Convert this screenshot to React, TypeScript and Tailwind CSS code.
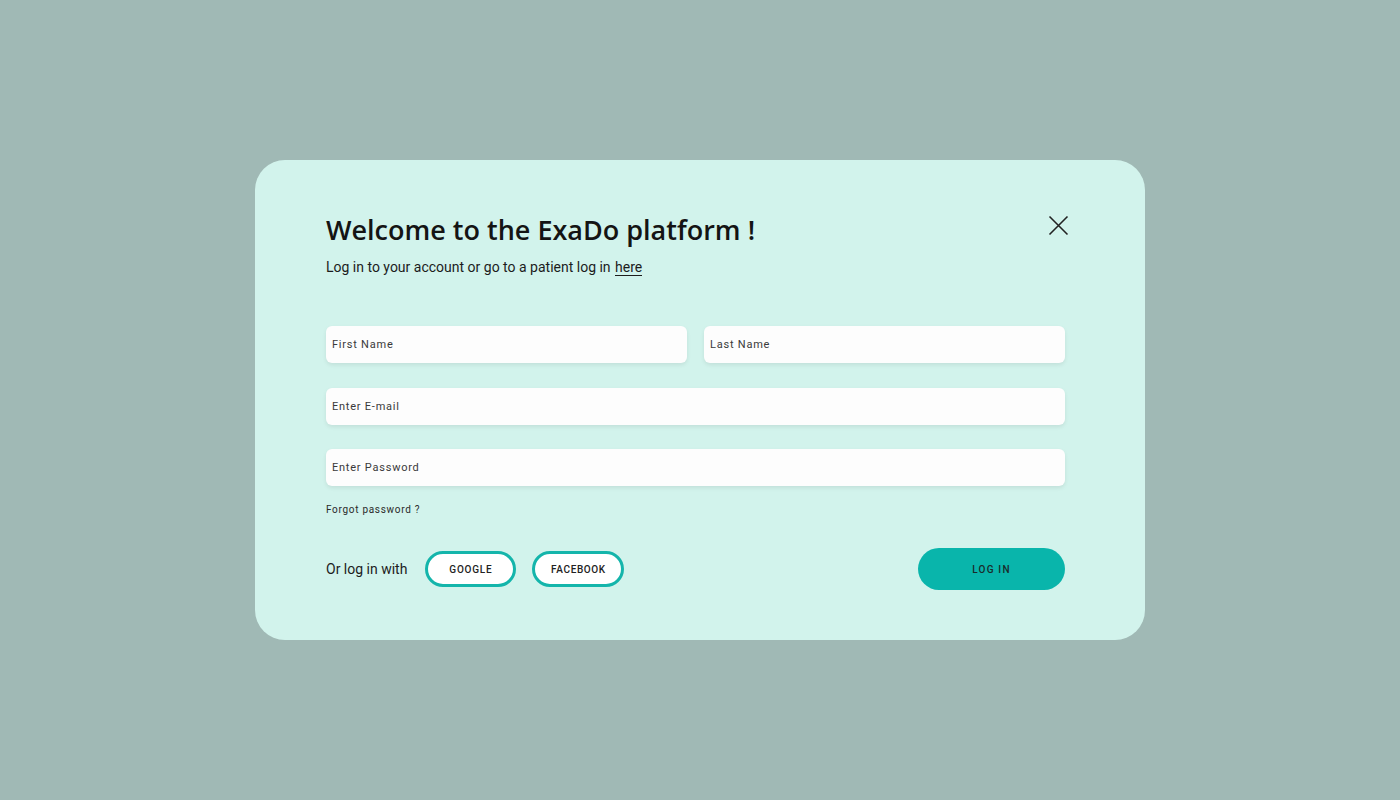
const inputClass =
  "h-[37px] w-full rounded-[6px] bg-[#fdfdfd] px-[6px] text-[11px] tracking-[0.07em] text-[#333] shadow-[0_2px_4px_rgba(0,0,0,0.08)] placeholder:text-[#3a3a3a] focus:outline-none";

const App = () => {
  return (
    <div className="flex h-[800px] w-full items-center justify-center bg-[#a0b9b5] font-['Roboto',sans-serif]">
      <div className="flex h-[480px] w-[890px] flex-col rounded-[30px] bg-[#d2f3ec] pl-[71px] pr-[80px] pt-[52px]">
        <div className="flex items-start justify-between">
          <div>
            <h1 className="text-[27px] font-semibold leading-[36px] text-[#141414] font-['Open_Sans',sans-serif]">
              Welcome to the ExaDo platform !
            </h1>
            <p className="mt-[10px] text-[14px] leading-[18px] text-[#1c1c1c]">
              Log in to your account or go to a patient log in{" "}
              <a className="ml-[1px] inline-block border-b border-[#1c1c1c] leading-[16px]">here</a>
            </p>
          </div>
          <button className="mt-[3px] -mr-[4px] text-[#222]" aria-label="close">
            <svg width="21" height="21" viewBox="0 0 21 21" fill="none" stroke="currentColor" strokeWidth="1.6">
              <path d="M1.5 1.5 L19.5 19.5 M19.5 1.5 L1.5 19.5" />
            </svg>
          </button>
        </div>

        <form className="mt-[50px] flex flex-col">
          <div className="grid grid-cols-2 gap-[17px]">
            <input className={inputClass} placeholder="First Name" />
            <input className={inputClass} placeholder="Last Name" />
          </div>
          <input className={`${inputClass} mt-[25px]`} placeholder="Enter E-mail" />
          <input className={`${inputClass} mt-[24px]`} placeholder="Enter Password" />
          <a className="mt-[16px] text-[10px] tracking-[0.07em] text-[#2a2a2a]">Forgot password ?</a>

          <div className="mt-[31px] flex items-center justify-between">
            <div className="flex items-center">
              <span className="text-[14px] text-[#1c1c1c]">Or log in with</span>
              <button
                type="button"
                className="ml-[18px] h-[36px] w-[91px] rounded-full border-[3px] border-[#14b5ab] bg-white text-[10px] font-medium tracking-[0.08em] text-[#222]"
              >
                GOOGLE
              </button>
              <button
                type="button"
                className="ml-[16px] h-[36px] w-[92px] rounded-full border-[3px] border-[#14b5ab] bg-white text-[10px] font-medium tracking-[0.06em] text-[#222]"
              >
                FACEBOOK
              </button>
            </div>
            <button
              type="submit"
              className="h-[42px] w-[147px] rounded-full bg-[#09b5ab] text-[10px] font-medium tracking-[0.12em] text-[#1a2b2a]"
            >
              LOG IN
            </button>
          </div>
        </form>
      </div>
    </div>
  );
};

export default App;
